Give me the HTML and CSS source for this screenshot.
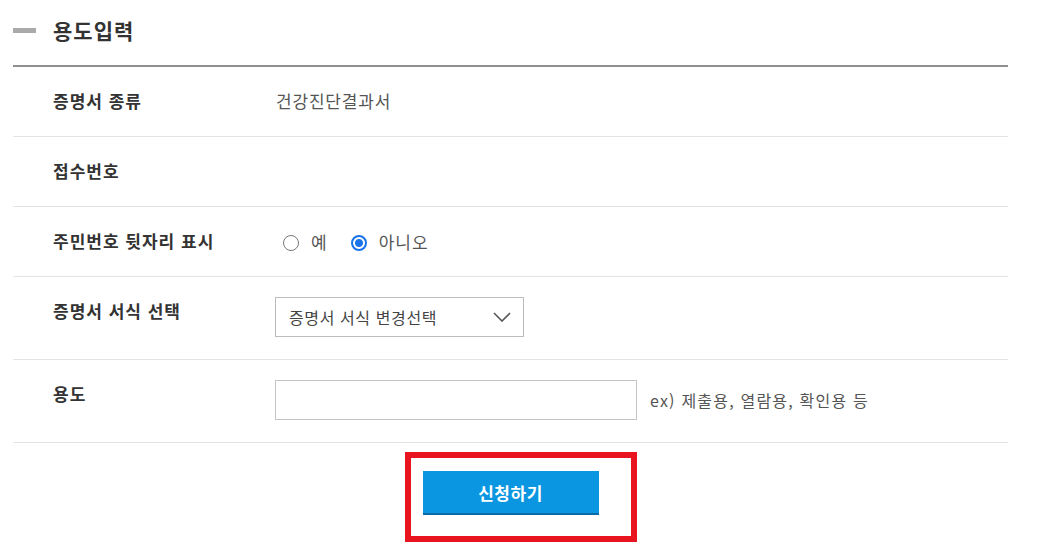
FILE: index.html
```html
<!DOCTYPE html>
<html lang="ko">
<head>
    <meta charset="UTF-8">
    <title>용도입력</title>
    <link rel="stylesheet" href="styles.css">
</head>
<body>
    <div class="wrap">
        <h2 class="sec-title"><span class="bar"></span>용도입력</h2>

        <div class="form-table">
            <div class="row">
                <div class="label">증명서 종류</div>
                <div class="value text">건강진단결과서</div>
            </div>
            <div class="row">
                <div class="label">접수번호</div>
                <div class="value text"></div>
            </div>
            <div class="row">
                <div class="label">주민번호 뒷자리 표시</div>
                <div class="value radios">
                    <label class="radio"><input type="radio" name="rrn"> 예</label>
                    <label class="radio"><input type="radio" name="rrn" checked> 아니오</label>
                </div>
            </div>
            <div class="row">
                <div class="label">증명서 서식 선택</div>
                <div class="value control">
                    <div class="select">
                        <span>증명서 서식 변경선택</span>
                        <svg width="18" height="10" viewBox="0 0 18 10"><polyline points="1,1 9,9 17,1" fill="none" stroke="#555" stroke-width="1.6"/></svg>
                    </div>
                </div>
            </div>
            <div class="row">
                <div class="label">용도</div>
                <div class="value control">
                    <input type="text" class="txt">
                    <span class="hint">ex) 제출용, 열람용, 확인용 등</span>
                </div>
            </div>
        </div>

        <div class="btn-area">
            <div class="btn-box">
                <button type="button" class="btn">신청하기</button>
                <span class="mark"></span>
            </div>
        </div>
    </div>
</body>
</html>
```

FILE: styles.css
```css
html, body {
    height: 100%;
}

body {
    margin: 0;
    font-family: "Noto Sans CJK KR", "Noto Sans", sans-serif;
    color: #333;
    background: #fff;
}

.wrap {
    width: 995px;
    margin-left: 13px;
    padding-bottom: 40px;
}

.sec-title {
    display: flex;
    align-items: center;
    margin: 0 0 21px;
    padding-top: 16px;
    height: 28px;
    line-height: 28px;
    font-size: 21px;
    letter-spacing: 1px;
    font-weight: bold;
    color: #333;
}

.sec-title .bar {
    width: 23px;
    height: 5px;
    background: #aaa;
    margin-right: 17px;
}

.form-table {
    border-top: 2px solid #8f8f8f;
}

.row {
    display: grid;
    grid-template-columns: 262px 1fr;
    border-bottom: 1px solid #e3e3e3;
}

.label {
    padding: 23px 0 24px 40px;
    line-height: 22px;
    font-size: 17px;
    letter-spacing: 1px;
    font-weight: bold;
    color: #333;
}

.value.text {
    padding: 23px 0 24px 1px;
    line-height: 22px;
    font-size: 17px;
    letter-spacing: 0.8px;
    color: #555;
}

.value.radios {
    display: flex;
    align-items: center;
    padding: 24px 0 23px 8px;
    line-height: 22px;
    font-size: 17px;
    letter-spacing: 1px;
    color: #555;
}

.radio {
    display: flex;
    align-items: center;
    margin-right: 23px;
}

.radio input {
    appearance: none;
    -webkit-appearance: none;
    width: 16px;
    height: 16px;
    margin: 2px 12px 0 0;
    border: 1px solid #777;
    border-radius: 50%;
    background: #fff;
}

.radio input:checked {
    border: 2px solid #1a73e8;
    background: radial-gradient(circle, #1a73e8 0 3.5px, #fff 4.5px);
}

.value.control {
    display: flex;
    align-items: center;
    padding: 20px 0 22px;
}

.select {
    box-sizing: border-box;
    width: 249px;
    height: 40px;
    border: 1px solid #bcbcbc;
    display: flex;
    align-items: center;
    justify-content: space-between;
    padding: 0 12px 0 13px;
    font-size: 16px;
    letter-spacing: 0.6px;
    color: #444;
}

.txt {
    box-sizing: border-box;
    width: 362px;
    height: 40px;
    margin: 0;
    border: 1px solid #c4c4c4;
    outline: none;
}

.hint {
    margin-left: 13px;
    font-size: 16px;
    letter-spacing: 1.2px;
    color: #555;
}

.btn-area {
    display: flex;
    justify-content: center;
    padding-top: 28px;
}

.btn-box {
    position: relative;
}

.btn {
    display: block;
    width: 176px;
    height: 44px;
    border: none;
    border-bottom: 2px solid #0b6aa6;
    background: #0a96e0;
    color: #fff;
    font-family: inherit;
    font-size: 17px;
    letter-spacing: 0.5px;
    font-weight: bold;
}

.mark {
    position: absolute;
    left: -18px;
    top: -19px;
    right: -38px;
    bottom: -27px;
    border: 6px solid #e8141f;
}
```
